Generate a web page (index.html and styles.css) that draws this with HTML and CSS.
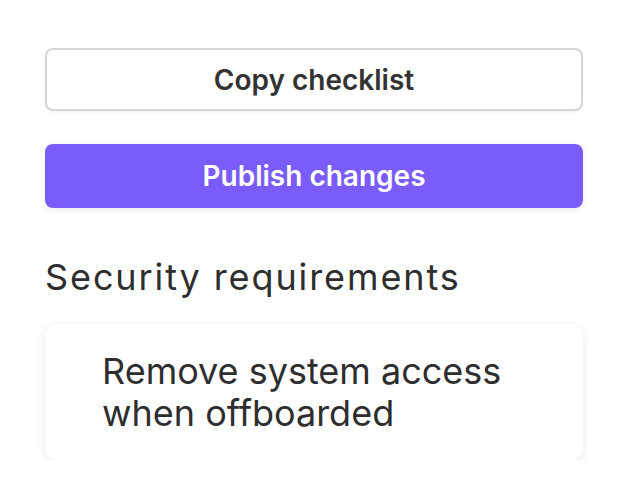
FILE: index.html
```html
<!DOCTYPE html>
<html>
<head>
<meta charset="utf-8">
<link rel="stylesheet" href="styles.css">
</head>
<body>
<div class="panel">
  <button class="btn btn-secondary">Copy checklist</button>
  <button class="btn btn-primary">Publish changes</button>
  <h2 class="section-title">Security requirements</h2>
  <div class="card">
    <p class="card-text">Remove system access when offboarded</p>
  </div>
</div>
</body>
</html>
```

FILE: styles.css
```css
html, body {
  margin: 0;
  padding: 0;
  background: #ffffff;
}
body {
  font-family: Inter, "Noto Sans", sans-serif;
  color: #2e2e2e;
}
.panel {
  width: 538px;
  padding: 48px 0 0 45px;
  display: flex;
  flex-direction: column;
}
.btn {
  font-family: Inter, sans-serif;
  font-size: 28px;
  font-weight: 600;
  letter-spacing: 0;
  border-radius: 8px;
  width: 100%;
  cursor: pointer;
  padding: 0;
}
.btn-secondary {
  height: 63px;
  background: #ffffff;
  color: #333333;
  border: 2px solid #d6d6d6;
  box-shadow: 0 1px 3px rgba(0,0,0,0.06);
}
.btn-primary {
  margin-top: 33px;
  height: 64px;
  background: #7a5cfa;
  color: #ffffff;
  border: none;
  box-shadow: 0 2px 6px rgba(0,0,0,0.08);
}
.section-title {
  margin: 48px 0 0 0;
  font-size: 36px;
  font-weight: 400;
  line-height: 42px;
  letter-spacing: 1.9px;
  color: #2e2e2e;
}
.card {
  margin-top: 26px;
  background: #ffffff;
  border-radius: 12px;
  padding: 26px 40px 26px 57px;
  box-shadow: 0 2px 10px rgba(0,0,0,0.09);
}
.card-text {
  margin: 0;
  font-size: 36px;
  line-height: 42px;
  color: #2e2e2e;
}
```
